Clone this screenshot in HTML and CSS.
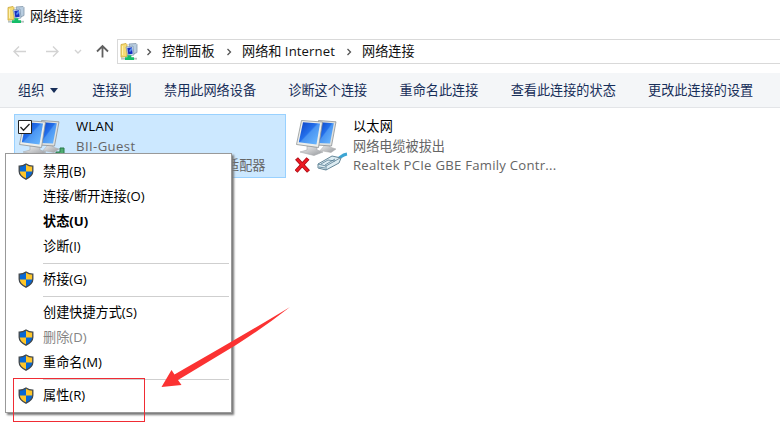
FILE: index.html
```html
<!DOCTYPE html>
<html lang="zh-CN">
<head>
<meta charset="utf-8">
<title>网络连接</title>
<link rel="stylesheet" href="styles.css">
</head>
<body>
<svg class="defs" aria-hidden="true">
  <defs>
    <linearGradient id="screen" x1="0" y1="0" x2="1" y2="1">
      <stop offset="0" stop-color="#0a3fc4"/><stop offset=".45" stop-color="#2470ea"/><stop offset=".5" stop-color="#4a95f2"/><stop offset="1" stop-color="#6ebcff"/>
    </linearGradient>
    <linearGradient id="base" x1="0" y1="0" x2="1" y2="1">
      <stop offset="0" stop-color="#f4f4f4"/><stop offset="1" stop-color="#96999d"/>
    </linearGradient>
    <symbol id="folder-net" viewBox="0 0 18 18">
      <path d="M1 1.500 6 .5l1 1v12l-6 .7z" fill="#f6dc75" stroke="#c9a437" stroke-width=".8"/>
      <path d="M2.500 3v9" stroke="#fff1ae"/>
      <path d="m9 1 7-.5 1 1v8L11 12z" fill="#b9cde0" stroke="#8497aa" stroke-width=".8"/>
      <path d="m6 4 7-1 1 9-6 1z" fill="#d8e5ef" stroke="#7790aa" stroke-width=".7"/>
      <path d="m7.300 5 4.700-.8.7 6.500-4.400.8z" fill="#162fc3"/>
      <path d="m9 8 2-3 .8 0 .2 2-2 2z" fill="#5792ed"/>
      <path d="M1 15.700h16" stroke="#b8c3c1" stroke-width="1.800"/>
      <path d="M7.300 12.300h4v2H14v2.800H5v-2.800h2.300z" fill="#15bd68"/>
    </symbol>
    <symbol id="monitors" viewBox="0 0 46 40">
      <path d="m30 27 5-1 0 3 6 2-5 3.500-11-2z" fill="url(#base)" stroke="#aaa" stroke-width=".5"/>
      <path d="M23.500 2.500 41 3.800 36.500 28 22 27z" fill="#dfe1df" stroke="#8d9295" stroke-width=".8"/>
      <path d="M25 4.300 38.800 5.300 35 25.500 23 25z" fill="url(#screen)"/>
      <path d="m12 28 10 1 0 3 6 2-9 3.500-14-3.500 7-2z" fill="url(#base)" stroke="#a5a8ab" stroke-width=".6"/>
      <path d="M6.500 2.500 27.500 4 23.500 29.500 1.500 26.500z" fill="#edeeea" stroke="#8f9496" stroke-width=".8"/>
      <path d="M8 4.300 25 5.500 21.500 26.500 3.800 24.300z" fill="url(#screen)"/>
    </symbol>
    <symbol id="shield" viewBox="0 0 16 17">
      <path d="M8 1C6.300 2.200 3.500 3.100 1.200 3.200v5.100c0 3.500 3 6 6.800 7.900 3.800-1.900 6.800-4.400 6.800-7.900V3.200C12.500 3.100 9.700 2.200 8 1z" fill="#ffc629"/>
      <path d="M8 1C6.300 2.200 3.500 3.100 1.200 3.200v5.300H8zM8 8.500v7.700c3.800-1.900 6.700-4.300 6.800-7.700z" fill="#0768d5"/>
      <path d="M8 1C6.300 2.200 3.500 3.100 1.200 3.200v5.100c0 3.500 3 6 6.800 7.900 3.800-1.900 6.800-4.400 6.800-7.900V3.200C12.500 3.100 9.700 2.200 8 1z" fill="none" stroke="#42484d" stroke-width="1.300"/>
    </symbol>
    <symbol id="chevron" viewBox="0 0 6 8"><path d="m1.500 1 3 3-3 3" fill="none" stroke="#555" stroke-width="1.300"/></symbol>
  </defs>
</svg>

<header class="titlebar">
  <svg class="folder-icon"><use href="#folder-net"/></svg>
  <h1>网络连接</h1>
</header>

<nav class="navigation">
  <svg class="nav-arrows" viewBox="0 0 117 26">
    <g fill="none" stroke="#d3d3d3" stroke-width="1.400">
      <path d="M26 12.500H14m5-5-5 5 5 5"/><path d="M46 12.500h12m-5-5 5 5-5 5"/>
      <path d="m75 11 3 3 3-3"/>
    </g>
    <path d="M102.500 18.500V7m-5.500 5.500 5.500-5.500 5.500 5.500" fill="none" stroke="#606060" stroke-width="1.800"/>
  </svg>
  <div class="address">
    <svg class="folder-icon"><use href="#folder-net"/></svg>
    <svg class="chevron"><use href="#chevron"/></svg>
    <span class="crumb crumb-panel">控制面板</span>
    <svg class="chevron"><use href="#chevron"/></svg>
    <span class="crumb crumb-internet">网络和 <span>Internet</span></span>
    <svg class="chevron"><use href="#chevron"/></svg>
    <span class="crumb">网络连接</span>
  </div>
</nav>

<div class="toolbar">
  <span class="organize">组织<i></i></span>
  <span>连接到</span>
  <span>禁用此网络设备</span>
  <span>诊断这个连接</span>
  <span>重命名此连接</span>
  <span>查看此连接的状态</span>
  <span>更改此连接的设置</span>
</div>

<main class="connections">
  <article class="connection selected">
    <svg class="device" viewBox="0 0 54 58">
      <use href="#monitors" width="46" height="40"/>
      <path d="M38 39v-5h4v-4h4v10z" fill="#4eac70" stroke="#28784a"/>
    </svg>
    <svg class="checkbox" viewBox="0 0 14 14"><path d="M.5.5h13v13H.5z" fill="#fff" stroke="#222"/><path d="m2.500 7 3 3.200L11.500 4" fill="none" stroke="#222" stroke-width="1.300"/></svg>
    <div class="details">
      <div class="name">WLAN</div>
      <div class="network">BII-Guest</div>
      <div class="adapter">适配器</div>
    </div>
  </article>
  <article class="connection">
    <svg class="device" viewBox="0 0 54 58">
      <use href="#monitors" width="46" height="40"/>
      <path d="m1.500 40.500 12 13M13 40.500l-12 13" fill="none" stroke="#a80c14" stroke-width="4"/>
      <path d="m2 41 11 12M12.500 41l-11 12" fill="none" stroke="#ed1b24" stroke-width="2.400"/>
      <path d="M42 41c4-1 4-4 10-5" fill="none" stroke="#3ca5d3" stroke-width="3"/>
      <path d="m23 46 14-8 9 2-2 5-13 7-8-2z" fill="#ddecf2" stroke="#668798"/>
      <path d="m23 46 8 2 14-8M31 48v4M26 46l7-4 7 1M30 47l10-6M24 49l6 1" fill="none" stroke="#557b91" stroke-width=".8"/>
    </svg>
    <div class="details">
      <div class="name">以太网</div>
      <div>网络电缆被拔出</div>
      <div class="realtek">Realtek PCIe GBE Family Contr...</div>
    </div>
  </article>
</main>

<ul class="context-menu">
  <li><svg><use href="#shield"/></svg><span>禁用(B)</span></li>
  <li><span>连接/断开连接(O)</span></li>
  <li class="default"><span>状态(U)</span></li>
  <li><span>诊断(I)</span></li>
  <li class="separator"></li>
  <li><svg><use href="#shield"/></svg><span>桥接(G)</span></li>
  <li class="separator"></li>
  <li><span>创建快捷方式(S)</span></li>
  <li class="disabled"><svg><use href="#shield"/></svg><span>删除(D)</span></li>
  <li><svg><use href="#shield"/></svg><span>重命名(M)</span></li>
  <li class="separator"></li>
  <li><svg><use href="#shield"/></svg><span>属性(R)</span></li>
</ul>
<div class="highlight"></div>
<svg class="pointer" viewBox="0 0 132 84"><path d="m2.500 81 10-17 3 4.500Q90 26 131 1 104 22 77 39L19 74l3.500 5z" fill="#fb3232"/></svg>
</body>
</html>
```
FILE: styles.css
```css
* { box-sizing: border-box; }
body {
  margin: 0;
  width: 780px;
  height: 446px;
  position: relative;
  overflow: hidden;
  background: #fff;
  color: #111;
  font: 13.15px/20px "Open Sans", "Noto Sans CJK SC", sans-serif;
  white-space: nowrap;
}
.defs { position: absolute; width: 0; height: 0; }
svg { display: block; flex: none; }
.folder-icon { width: 18px; height: 18px; }
.titlebar { height: 39px; display: flex; align-items: flex-start; padding: 6px 0 0 7px; }
.titlebar h1 { margin: 0 0 0 5px; font-size: 13.15px; font-weight: 400; }
.navigation { display: flex; height: 34px; }
.nav-arrows { width: 117px; height: 26px; }
.address { flex: 1; height: 25px; display: flex; align-items: center; border: 1px solid #d9d9d9; border-right: 0; padding-left: 2px; }
.chevron { width: 6px; height: 8px; margin: 0 10px 0 9px; }
.address .folder-icon + .chevron { margin-left: 8px; }
.address .crumb { position: relative; top: -1px; }
.crumb-internet { width: 95px; }
.crumb-internet span { letter-spacing: .12px; }
.crumb-panel { width: 55px; }
.toolbar { height: 35px; display: flex; align-items: center; gap: 32.3px; padding-left: 18px; background: #f4f6f8; border-bottom: 1px solid #e3e5e8; color: #172e59; }
.organize { display: flex; align-items: center; width: 42px; }
.organize i { margin-left: 6px; border: 4.5px solid transparent; border-top: 5px solid #172e59; border-bottom: 0; }
.connections { display: flex; gap: 5px; padding: 6px 0 0 14px; }
.connection { position: relative; width: 272px; height: 64px; display: flex; border: 1px solid transparent; }
.selected { background: #cce8ff; border-color: #99d1ff; }
.device { width: 54px; height: 58px; margin: 3px 0 0 3px; }
.checkbox { position: absolute; left: 3px; top: 5px; width: 14px; height: 14px; }
.details { margin-left: 4px; padding-top: 2px; color: #656565; line-height: 19.5px; }
.name { color: #000; letter-spacing: .2px; }
.network { letter-spacing: .4px; }
.adapter { padding-left: 150px; }
.realtek { letter-spacing: .25px; }
.context-menu { position: absolute; left: 5px; top: 153px; width: 227px; height: 260px; margin: 0; padding: 5px 2px 0 37px; list-style: none; background: #fff; border: 1px solid #999; box-shadow: 2px 2px 2px #777; color: #000; }
.context-menu li { height: 25px; display: flex; align-items: center; }
.context-menu li > span { position: relative; top: -.5px; }
.context-menu svg { width: 16px; height: 17px; margin: 0 9px 0 -25px; }
.context-menu .separator { height: 8px; }
.separator::before { content: ""; width: 186px; height: 1px; background: #cfcfcf; }
.default { font-weight: 700; }
.disabled span { color: #858585; }
.highlight { position: absolute; left: 13px; top: 378px; width: 132px; height: 44px; border: 1px solid #f02c34; }
.pointer { position: absolute; left: 159px; top: 306px; width: 132px; height: 84px; }
```
